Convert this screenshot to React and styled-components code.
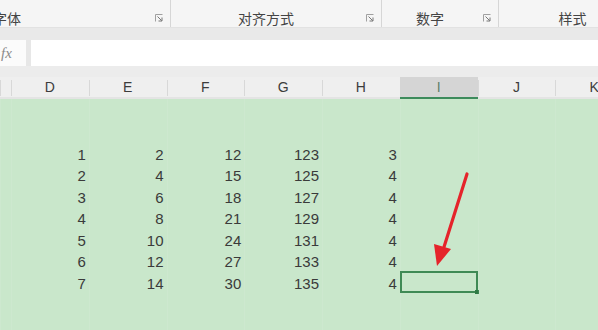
import styled, { createGlobalStyle } from "styled-components";

const GlobalStyle = createGlobalStyle`
  html, body { margin: 0; padding: 0; background: #efefef; }
  body { font-family: "Liberation Sans", Arial, "Noto Sans CJK SC", sans-serif; }
`;

const Page = styled.div`
  position: relative;
  width: 598px;
  height: 330px;
  overflow: hidden;
  display: flex;
  flex-direction: column;
  background: #efefef;
`;

const Ribbon = styled.div`
  display: flex;
  height: 27px;
  margin-left: -136px;
  background: #f5f5f5;
  flex-shrink: 0;
`;

const Group = styled.div`
  position: relative;
  width: ${(p) => p.$width}px;
  flex-shrink: 0;
  display: flex;
  align-items: center;
  justify-content: center;
  padding: 8px 20px 0 0;
  box-sizing: border-box;
  border-right: 1px solid ${(p) => (p.$last ? "transparent" : "#d6d6d6")};
  font-family: "Noto Sans CJK SC", sans-serif;
  font-size: 14px;
  color: #444;
  line-height: 20px;
  white-space: nowrap;
`;

const Launcher = styled.svg`
  position: absolute;
  right: 7px;
  bottom: 5px;
  width: 8px;
  height: 8px;
`;

const Strip = styled.div`
  height: ${(p) => p.$h}px;
  flex-shrink: 0;
  background: ${(p) => p.$bg};
  border-top: ${(p) => (p.$line ? "1px solid #e2e2e2" : "none")};
  box-sizing: border-box;
`;

const FormulaBar = styled.div`
  display: flex;
  height: 26px;
  flex-shrink: 0;
  gap: 5px;
  background: #e7e7e7;
`;

const FxBox = styled.div`
  width: 26px;
  background: #fbfbfb;
  font-family: "Liberation Serif", serif;
  font-style: italic;
  font-size: 15px;
  color: #8a8a8a;
  display: flex;
  align-items: center;
  padding-left: 1px;
  box-sizing: border-box;
`;

const FormulaInput = styled.div`
  flex: 1;
  background: #ffffff;
`;

const Sheet = styled.div`
  flex: 1;
  display: grid;
  grid-template-columns: 11px repeat(8, 77.75px);
  grid-template-rows: 22px repeat(11, 21.5px);
  background: #c9e7cb;
`;

const ColHead = styled.div`
  position: relative;
  background: ${(p) => (p.$active ? "#d5d5d5" : "#efefef")};
  border-bottom: 2px solid ${(p) => (p.$active ? "#3d8b5c" : "#e4e4e4")};
  display: flex;
  align-items: center;
  justify-content: center;
  font-size: 14px;
  color: ${(p) => (p.$active ? "#5f7f6a" : "#3c3c3c")};
  &::before {
    content: "";
    position: absolute;
    left: 0;
    top: 3px;
    bottom: 1px;
    width: 1px;
    background: ${(p) => (p.$active ? "transparent" : "#d8d8d8")};
  }
`;

const Cell = styled.div`
  position: relative;
  display: flex;
  align-items: flex-end;
  justify-content: flex-end;
  padding: 0 3px 0 0;
  box-sizing: border-box;
  font-size: 15px;
  line-height: 18px;
  color: #3a3a3a;
  border-left: 1px solid rgba(255, 255, 255, 0.08);
  ${(p) =>
    p.$selected &&
    `
    border: 2px solid #3f8a55;
    &::after {
      content: "";
      position: absolute;
      right: -3px;
      bottom: -3px;
      width: 4px;
      height: 4px;
      background: #2f7a45;
    }
  `}
`;

const Arrow = styled.svg`
  position: absolute;
  left: 0;
  top: 0;
  width: 598px;
  height: 330px;
  pointer-events: none;
`;

const columns = ["D", "E", "F", "G", "H", "I", "J", "K"];

const data = [
  [1, 2, 12, 123, 3],
  [2, 4, 15, 125, 4],
  [3, 6, 18, 127, 4],
  [4, 8, 21, 129, 4],
  [5, 10, 24, 131, 4],
  [6, 12, 27, 133, 4],
  [7, 14, 30, 135, 4],
];

const groups = [
  { label: "字体", width: 307 },
  { label: "对齐方式", width: 211 },
  { label: "数字", width: 117 },
  { label: "样式", width: 168, last: true },
];

function LauncherIcon() {
  return (
    <Launcher viewBox="0 0 8 8">
      <path d="M0.5 7.5V0.5H7.5" fill="none" stroke="#a0a0a0" strokeWidth="1" />
      <path d="M2.5 2.5L6.8 6.8M7 3.5V7H3.5" fill="none" stroke="#777" strokeWidth="1" />
    </Launcher>
  );
}

export default function App() {
  const rows = [];
  for (let r = 0; r < 11; r++) {
    const values = r >= 2 && r < 9 ? data[r - 2] : null;
    rows.push(
      <Cell key={`rh${r}`} />,
      ...columns.map((c, ci) => (
        <Cell key={`${r}-${c}`} $selected={r === 8 && c === "I"}>
          {values && ci < 5 ? values[ci] : ""}
        </Cell>
      ))
    );
  }

  return (
    <Page>
      <GlobalStyle />
      <Ribbon>
        {groups.map((g) => (
          <Group key={g.label} $width={g.width} $last={g.last}>
            <span>{g.label}</span>
            {!g.last && <LauncherIcon />}
          </Group>
        ))}
      </Ribbon>
      <Strip $h={13} $bg="#e9e9e9" $line />
      <FormulaBar>
        <FxBox>fx</FxBox>
        <FormulaInput />
      </FormulaBar>
      <Strip $h={11} $bg="#ececec" />
      <Sheet>
        <ColHead />
        {columns.map((c) => (
          <ColHead key={c} $active={c === "I"}>
            {c}
          </ColHead>
        ))}
        {rows}
      </Sheet>
      <Arrow viewBox="0 0 598 330">
        <line x1="467" y1="174" x2="444" y2="247" stroke="#e5242b" strokeWidth="3.2" strokeLinecap="round" />
        <polygon points="437,266 434,244 451,249" fill="#e5242b" />
      </Arrow>
    </Page>
  );
}
